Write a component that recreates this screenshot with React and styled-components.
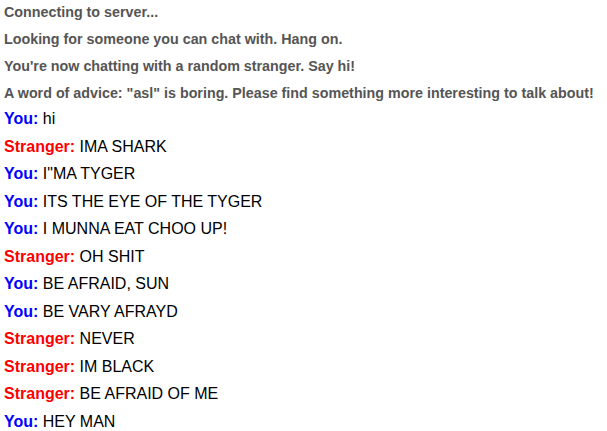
import React from "react";
import styled, { createGlobalStyle } from "styled-components";

const GlobalStyle = createGlobalStyle`
  body {
    margin: 0;
    background: #fff;
    font-family: "Liberation Sans", Arial, sans-serif;
  }
`;

const statusLines = [
  "Connecting to server...",
  "Looking for someone you can chat with. Hang on.",
  "You're now chatting with a random stranger. Say hi!",
  'A word of advice: "asl" is boring. Please find something more interesting to talk about!',
];

const messages = [
  ["you", "hi"],
  ["stranger", "IMA SHARK"],
  ["you", 'I"MA TYGER'],
  ["you", "ITS THE EYE OF THE TYGER"],
  ["you", "I MUNNA EAT CHOO UP!"],
  ["stranger", "OH SHIT"],
  ["you", "BE AFRAID, SUN"],
  ["you", "BE VARY AFRAYD"],
  ["stranger", "NEVER"],
  ["stranger", "IM BLACK"],
  ["stranger", "BE AFRAID OF ME"],
  ["you", "HEY MAN"],
];

const App = () => {
  return (
    <>
      <GlobalStyle />
      <Log>
        {statusLines.map((line, i) => (
          <StatusItem key={i}>{line}</StatusItem>
        ))}
        {messages.map(([who, text], i) => (
          <MsgItem key={i}>
            <Who $who={who}>{who === "you" ? "You:" : "Stranger:"}</Who> {text}
          </MsgItem>
        ))}
      </Log>
    </>
  );
};

export default App;

const Log = styled.div`
  display: flex;
  flex-direction: column;
  padding: 0 4px;
`;

const StatusItem = styled.div`
  flex: none;
  height: 27px;
  line-height: 24px;
  font-size: 14.3px;
  font-weight: bold;
  color: #555;
  white-space: nowrap;
`;

const MsgItem = styled.div`
  flex: none;
  height: 27.5px;
  line-height: 22px;
  font-size: 16px;
  color: #000;
  white-space: nowrap;
`;

const Who = styled.span`
  font-weight: bold;
  color: ${(p) => (p.$who === "you" ? "#00f" : "#f00")};
`;
